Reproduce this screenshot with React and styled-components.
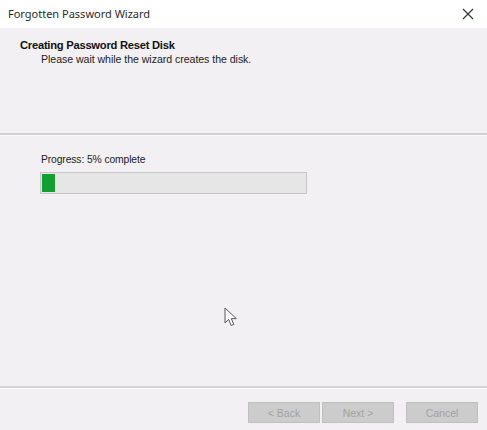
import React from "react";
import styled, { createGlobalStyle } from "styled-components";

const Global = createGlobalStyle`
  html, body { margin: 0; padding: 0; background: #f2f0f3; }
  * { box-sizing: border-box; }
`;

const Window = styled.div`
  position: relative;
  width: 487px;
  height: 430px;
  display: flex;
  flex-direction: column;
  background: #f2f0f3;
  font-family: "Liberation Sans", Arial, sans-serif;
  color: #1a1a1a;
  overflow: hidden;
`;

const TitleBar = styled.div`
  height: 28px;
  flex: none;
  background: #ffffff;
  display: flex;
  align-items: center;
  justify-content: space-between;
  padding: 0 6px 2px 8px;
  font-family: "Noto Sans", "Open Sans", sans-serif;
  font-size: 11px;
  color: #2b2b2b;
`;

const Close = styled.span`
  width: 14px;
  height: 14px;
  display: flex;
  align-items: center;
  justify-content: center;
  margin-right: 6px;
  margin-top: 1px;
`;

const Header = styled.div`
  height: 105px;
  flex: none;
  padding: 10px 0 0 20px;
  display: flex;
  flex-direction: column;
`;

const Heading = styled.div`
  font-weight: bold;
  font-size: 11.2px;
  letter-spacing: -0.25px;
  color: #111;
  line-height: 14px;
`;

const Sub = styled.div`
  font-size: 10.6px;
  color: #222;
  padding: 1px 0 0 21px;
  line-height: 13px;
  letter-spacing: -0.05px;
`;

const Rule = styled.div`
  flex: none;
  background: #d3d1d4;
  border-bottom: 1px solid #fbfafb;
  height: 3px;
`;

const Content = styled.div`
  flex: 1;
  padding: 17px 0 0 40px;
  display: flex;
  flex-direction: column;
`;

const Label = styled.div`
  font-size: 10.3px;
  color: #222;
  line-height: 13px;
  letter-spacing: -0.1px;
  padding-left: 1px;
`;

const Bar = styled.div`
  margin-top: 6px;
  width: 267px;
  height: 22px;
  border: 1px solid #c6c5c7;
  background: #e6e6e6;
  padding: 1px;
  display: flex;
`;

const Fill = styled.div`
  height: 100%;
  background: #0fa12c;
`;

const Footer = styled.div`
  height: 41px;
  flex: none;
  display: flex;
  align-items: flex-start;
  padding: 13px 0 0 248px;
`;

const Button = styled.button`
  width: 72px;
  height: 21px;
  margin-right: ${(p) => p.$gap || 0}px;
  background: #cccccc;
  border: 1px solid #bfbfbf;
  color: #a2a2a2;
  font-family: "Liberation Sans", Arial, sans-serif;
  font-size: 10.5px;
  padding: 0;
`;

const Cursor = styled.svg`
  position: absolute;
  left: 224px;
  top: 307px;
`;

export default function App() {
  const progress = 5;
  return (
    <Window>
      <Global />
      <TitleBar>
        <span>Forgotten Password Wizard</span>
        <Close>
          <svg width="12" height="12" viewBox="0 0 12 12">
            <path d="M1 1 L11 11 M11 1 L1 11" stroke="#333" strokeWidth="1.2" />
          </svg>
        </Close>
      </TitleBar>
      <Header>
        <Heading>Creating Password Reset Disk</Heading>
        <Sub>Please wait while the wizard creates the disk.</Sub>
      </Header>
      <Rule />
      <Content>
        <Label>Progress: {progress}% complete</Label>
        <Bar>
          <Fill style={{ width: `${progress}%` }} />
        </Bar>
      </Content>
      <Rule />
      <Footer>
        <Button $gap={2} disabled>&lt; Back</Button>
        <Button $gap={12} disabled>Next &gt;</Button>
        <Button disabled>Cancel</Button>
      </Footer>
      <Cursor width="14" height="21" viewBox="0 0 14 21">
        <path
          d="M1 1 L1 16 L4.6 12.4 L7.2 18.5 L9.8 17.4 L7.3 11.6 L12.3 11.6 Z"
          fill="#fff"
          stroke="#555"
          strokeWidth="1"
          strokeLinejoin="round"
        />
      </Cursor>
    </Window>
  );
}
